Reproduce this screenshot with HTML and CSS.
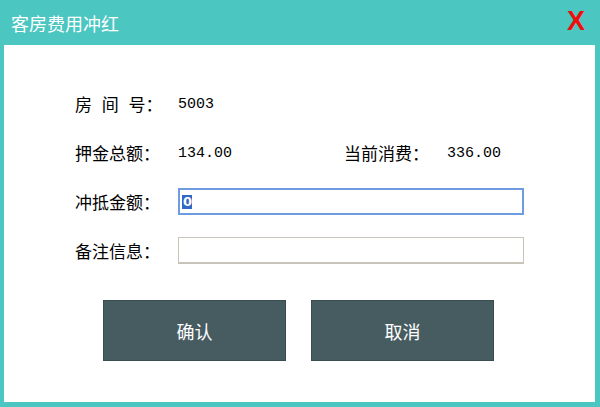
FILE: index.html
```html
<!DOCTYPE html>
<html lang="zh-CN">
<head>
    <meta charset="UTF-8">
    <title>客房费用冲红</title>
    <link rel="stylesheet" href="styles.css">
</head>
<body>
    <div class="dialog">
        <div class="titlebar">
            <span class="title">客房费用冲红</span>
            <span class="close">X</span>
        </div>

        <div class="content">
            <div class="row">
                <span class="label spaced">房 间 号：</span>
                <span class="value">5003</span>
            </div>
            <div class="row">
                <span class="label">押金总额：</span>
                <span class="value short">134.00</span>
                <span class="label">当前消费：</span>
                <span class="value">336.00</span>
            </div>
            <div class="row">
                <span class="label">冲抵金额：</span>
                <div class="field focused"><span class="sel">0</span></div>
            </div>
            <div class="row">
                <span class="label">备注信息：</span>
                <div class="field"></div>
            </div>

            <div class="buttons">
                <button class="btn">确认</button>
                <button class="btn">取消</button>
            </div>
        </div>
    </div>
</body>
</html>
```

FILE: styles.css
```css
body {
    margin: 0;
    font-family: "Noto Sans CJK SC", "Liberation Sans", sans-serif;
    color: #000;
}
.dialog {
    width: 600px;
    height: 407px;
    background-color: #4bc6c0;
    padding: 0 5px 5px 4px;
    box-sizing: border-box;
    display: flex;
    flex-direction: column;
}
.titlebar {
    height: 45px;
    display: flex;
    align-items: center;
    justify-content: space-between;
    padding: 0 10px 0 7px;
}
.title {
    color: #fff;
    font-size: 18px;
}
.close {
    color: #f20d0d;
    font-family: "Liberation Sans", sans-serif;
    font-weight: bold;
    font-size: 27px;
    line-height: 1;
    margin-top: -3px;
}
.content {
    flex: 1;
    background-color: #fff;
    padding: 45px 0 0 71px;
    display: flex;
    flex-direction: column;
    gap: 22px;
}
.row {
    height: 27px;
    display: flex;
    align-items: center;
}
.label {
    width: 103px;
    font-size: 17px;
    flex-shrink: 0;
}
.spaced {
    word-spacing: 6px;
}
.value {
    font-family: "Liberation Mono", monospace;
    font-size: 15px;
    margin-top: 1px;
}
.value.short {
    width: 166px;
}
.field {
    width: 346px;
    height: 27px;
    box-sizing: border-box;
    border: 1px solid #c9c4b9;
    border-bottom-width: 2px;
    display: flex;
    align-items: center;
    padding-left: 3px;
}
.field.focused {
    border: 2px solid #6f9be0;
    padding-left: 2px;
}
.sel {
    background-color: #3168c6;
    color: #fff;
    font-family: "DejaVu Sans", sans-serif;
    font-weight: bold;
    font-size: 13px;
    line-height: 14px;
    padding: 0 0 0 1px;
}
.buttons {
    display: flex;
    gap: 25px;
    margin: 14px 0 0 28px;
}
.btn {
    width: 183px;
    height: 61px;
    background-color: #475c61;
    border: 1px solid #3a4c50;
    color: #fff;
    font-family: "Noto Sans CJK SC", sans-serif;
    font-size: 18px;
    cursor: pointer;
}
```
